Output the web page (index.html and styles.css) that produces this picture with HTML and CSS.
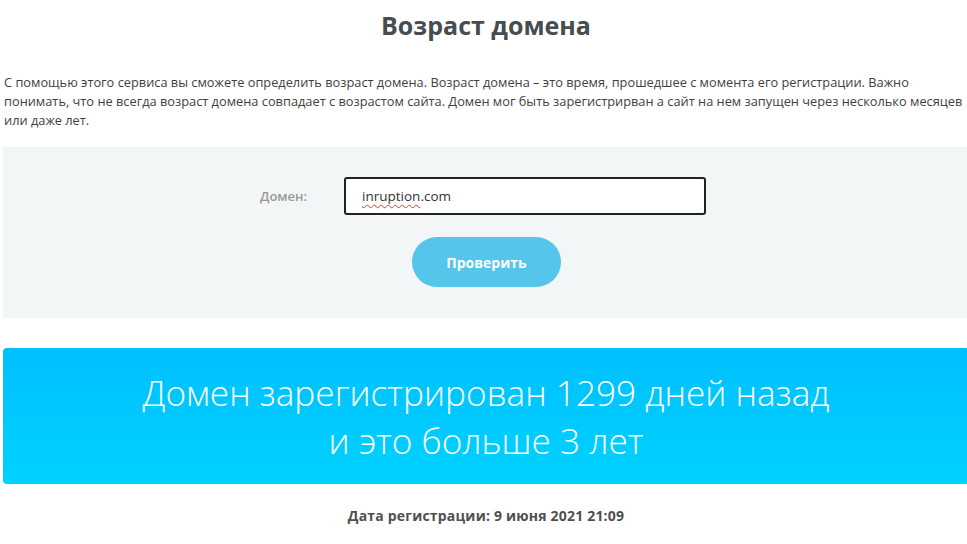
FILE: index.html
```html
<!DOCTYPE html>
<html lang="ru">
<head>
<meta charset="utf-8">
<link rel="stylesheet" href="styles.css">
</head>
<body>
<div class="page">
  <h1 class="title">Возраст домена</h1>
  <p class="intro">С помощью этого сервиса вы сможете определить возраст домена. Возраст домена – это время, прошедшее с момента его регистрации. Важно понимать, что не всегда возраст домена совпадает с возрастом сайта. Домен мог быть зарегистрирван а сайт на нем запущен через несколько месяцев или даже лет.</p>
  <form class="panel">
    <div class="row">
      <label class="label" for="domain">Домен:</label>
      <div class="field"><span class="typo">inruption</span>.com</div>
    </div>
    <button type="button" class="btn">Проверить</button>
  </form>
  <div class="result">Домен зарегистрирован 1299 дней назад<br>и это больше 3 лет</div>
  <div class="date">Дата регистрации: 9 июня 2021 21:09</div>
</div>
</body>
</html>
```
FILE: styles.css
```css
html, body { margin: 0; padding: 0; overflow: hidden; background: #fff; }
body { font-family: "Open Sans", "DejaVu Sans", sans-serif; color: #444; }
.page { margin-left: 3px; width: 966px; }
.title { margin: 0; padding-top: 9px; height: 44px; text-align: center; font-size: 25px; font-weight: 700; color: #474c51; line-height: 32px; }
.intro { margin: 20px 0 0 1px; font-size: 12.8px; line-height: 19px; color: #3f3f3f; }
.panel { margin-top: 17px; background: #f3f6f7; height: 171px; display: flex; flex-direction: column; align-items: center; padding-top: 30px; box-sizing: border-box; }
.row { display: flex; align-items: center; margin-left: -6px; }
.label { width: 84px; font-size: 13px; font-weight: 600; color: #999; text-align: left; }
.field { width: 362px; height: 38px; box-sizing: border-box; border: 2px solid #222; border-radius: 3px; background: #fff; padding-left: 16px; font-size: 13.5px; line-height: 34px; color: #333; }
.typo { text-decoration: underline wavy #e33; text-underline-offset: 3px; text-decoration-thickness: 1px; }
.btn { margin-top: 22px; margin-left: 1px; width: 149px; height: 50px; border: 0; border-radius: 25px; background: #55c5ec; color: #fff; font-family: inherit; font-size: 14px; font-weight: 700; }
.result { margin-top: 30px; height: 136px; box-sizing: border-box; padding-top: 20px; border-radius: 4px; background: linear-gradient(#00bfff, #00d2ff); color: #fff; text-align: center; font-size: 35.2px; font-weight: 300; line-height: 48px; }
.date { margin-top: 22px; text-align: center; font-size: 14px; font-weight: 700; color: #505050; letter-spacing: 0.2px; }
```
